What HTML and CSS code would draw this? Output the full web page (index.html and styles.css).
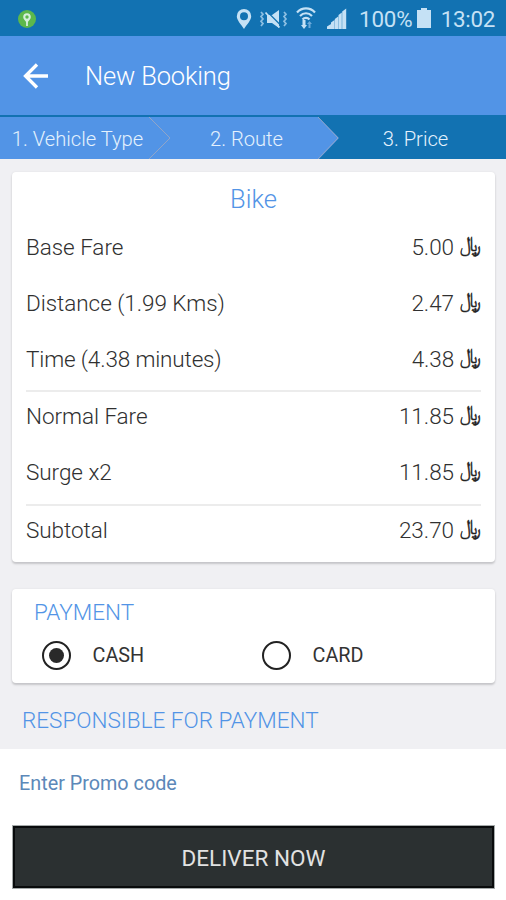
FILE: index.html
```html
<!DOCTYPE html>
<html lang="en">
<head>
<meta charset="utf-8">
<title>New Booking</title>
<link rel="stylesheet" href="styles.css">
</head>
<body>
<header class="status">
  <svg class="app-dot" viewBox="0 0 18 18"><circle cx="9" cy="9" r="9" fill="#5cb84c"/><path d="M9 16v-4" stroke="#d6efdc" stroke-width="1.800"/><path d="M9 13C7 10.500 5.200 9 5.200 7a3.800 3.800 0 0 1 7.600 0c0 2-1.800 3.500-3.800 6z" fill="#d6efdc"/><circle cx="9" cy="7" r="1.700" fill="#5cb84c"/></svg>
  <svg class="status-icons" viewBox="0 0 112 24" fill="#c5e1f5">
    <path fill-rule="evenodd" d="M8 2a7.200 7.200 0 0 0-7.200 7.200C.8 13.500 5 17 8 22c3-5 7.200-8.500 7.200-12.800A7.200 7.200 0 0 0 8 2zm0 3.300a4 4 0 1 1 0 8 4 4 0 0 1 0-8z"/>
    <path d="M31 8h5l7-5v18l-7-5h-5z"/>
    <path d="M32 5.500l13 13" stroke="#1272b2" stroke-width="1.300"/>
    <path d="M29.500 5.500l14 15" stroke="#c5e1f5" stroke-width="1.800"/>
    <path d="M25 5l2 2.300-2 2.300 2 2.400-2 2.300 2 2.300-2 2.400M48 5l2 2.300-2 2.300 2 2.400-2 2.300 2 2.300-2 2.400" fill="none" stroke="#8dbfe2" stroke-width="1.700"/>
    <g fill="none" stroke="#c5e1f5" stroke-width="2.200"><path d="M61 5.500c5-5.500 13-5.500 18 0M64 9c3.500-3.700 8.500-3.700 12 0M66.500 12.500c2-2.300 5-2.300 7 0"/></g>
    <path d="M66.500 13h3v5h1.500l-3 4-3-4h1.500z"/><path d="M72.500 21v-4H71l2.500-3 2.500 3h-1.500v4z" fill="#6daada"/>
    <path d="M91 19.500l4-2.500v5h-4zM95 15.500l3.500-2.500v9H95zM98.800 12l3.400-2.500V22h-3.400zM102.500 8l3.300-2.500V22h-3.300zM106.200 4.500l4-3V22h-4z"/>
  </svg>
  <span class="battery-text">100%</span>
  <svg class="battery" viewBox="0 0 14 20"><path d="M4 0h6v2h4v18H0V2h4z" fill="#c5e1f5"/></svg>
  <span class="clock">13:02</span>
</header>
<div class="appbar">
  <svg class="back" viewBox="0 0 26 26" fill="none" stroke="#fff" stroke-width="3.300"><path d="M25 13H2.500M14 1.500L2.500 13 14 24.500"/></svg>
  <h1>New Booking</h1>
</div>
<nav class="steps">
  <svg class="chevrons" viewBox="0 0 506 43" preserveAspectRatio="none"><path d="M0 1h318l21 21-20 21H0z" fill="#5294e6"/><path d="M149 1l21 21-21 21M318 1l20 21-20 21" fill="none" stroke="#91a5c8"/></svg>
  <span class="step s1">1. Vehicle Type</span><span class="step">2. Route</span><span class="step s3">3. Price</span>
</nav>
<main>
  <section class="card fare">
    <h2>Bike</h2>
    <div class="row"><span>Base Fare</span><span class="amt">5.00 <i>﷼</i></span></div>
    <div class="row"><span>Distance (1.99 Kms)</span><span class="amt">2.47 <i>﷼</i></span></div>
    <div class="row time"><span>Time (4.38 minutes)</span><span class="amt">4.38 <i>﷼</i></span></div>
    <div class="row line"><span>Normal Fare</span><span class="amt">11.85 <i>﷼</i></span></div>
    <div class="row"><span>Surge x2</span><span class="amt">11.85 <i>﷼</i></span></div>
    <div class="row line total"><span>Subtotal</span><span class="amt">23.70 <i>﷼</i></span></div>
  </section>
  <section class="card payment">
    <h3>PAYMENT</h3>
    <div class="options">
      <div class="option"><span class="radio on"></span><span>CASH</span></div>
      <div class="option"><span class="radio"></span><span>CARD</span></div>
    </div>
  </section>
  <h3 class="responsible">RESPONSIBLE FOR PAYMENT</h3>
</main>
<footer>
  <div class="promo">Enter Promo code</div>
  <div class="deliver">DELIVER NOW</div>
</footer>
</body>
</html>
```
FILE: styles.css
```css
* { box-sizing: border-box; }
body { margin: 0; width: 506px; height: 900px; overflow: hidden; background: #fff; font-family: Roboto, "Liberation Sans", sans-serif; font-weight: 300; color: #303030; }
h1, h2, h3 { margin: 0; font-weight: 300; }
.status { height: 36px; background: #1272b2; display: flex; align-items: center; padding: 1px 11px 0 18px; color: #c5e1f5; font-weight: 400; font-size: 22.400px; }
.app-dot { width: 18px; height: 18px; }
.status-icons { width: 112px; height: 24px; margin-left: 200px; }
.battery-text { margin-left: 11px; width: 53px; white-space: nowrap; letter-spacing: -0.2px; }
.battery { width: 14px; height: 20px; margin: -1px 0 0 5px; }
.clock { margin-left: auto; letter-spacing: -0.3px; }
.appbar { height: 79px; background: #5294e6; display: flex; align-items: center; padding-left: 23px; color: #fff; }
.back { width: 26px; height: 26px; }
h1 { font-size: 25.500px; letter-spacing: -0.15px; margin-left: 36px; }
.steps { height: 44px; background: #1272b2; display: grid; grid-template-columns: 156px 181px 169px; align-items: center; padding-top: 4px; position: relative; color: #e4f1fd; font-size: 20.200px; }
.chevrons { position: absolute; left: 0; top: 1px; width: 506px; height: 43px; }
.step { position: relative; text-align: center; white-space: nowrap; }
.s1 { padding-right: 1px; }
.s3 { padding-right: 12px; }
main { height: 590px; background: #f0f0f3; padding: 13px 11px 0 12px; }
.card { background: #fff; border-radius: 4px; box-shadow: 0 2px 2px #c6c6c9, 0 0 2px #dddde0; }
.fare { height: 390px; padding: 0 14px; }
h2 { height: 47px; line-height: 54px; text-align: center; font-size: 25.500px; color: #5294e6; }
.row { height: 56.300px; display: flex; justify-content: space-between; align-items: center; font-size: 22.500px; letter-spacing: -0.05px; }
.time { padding-bottom: 2px; letter-spacing: -0.15px; }
.line { border-top: 2px solid #ececec; margin-top: 2px; height: 54.300px; padding-bottom: 5px; }
.total { margin-top: 4px; padding-bottom: 6px; }
.amt { display: flex; align-items: center; }
.amt i { font-family: "DejaVu Sans", "Noto Sans", sans-serif; font-style: normal; font-size: 19px; line-height: 26px; margin: -8px 0 0 6px; color: #222; -webkit-text-stroke: 0.500px #222; transform: scaleY(1.12); }
.payment { height: 94px; margin-top: 27px; padding: 9px 22px 0; }
h3 { font-size: 22.500px; line-height: 28px; color: #5294e6; }
.options { display: grid; grid-template-columns: 220px 220px; margin-top: 15px; padding-left: 7.500px; }
.option { display: flex; align-items: center; gap: 22px; font-size: 19.800px; font-weight: 400; color: #333; }
.radio { width: 29px; height: 29px; border: 2.500px solid #222; border-radius: 50%; display: grid; place-items: center; }
.on::after { content: ""; width: 15px; height: 15px; border-radius: 50%; background: #292929; }
.responsible { margin: 23px 0 0 10px; }
footer { padding: 0 11px 0 12px; }
.promo { height: 76px; line-height: 69px; padding-left: 7px; font-size: 19.800px; font-weight: 400; color: #5c88b9; }
.deliver { height: 64px; background: #2b3031; border: 3px solid #090b0c; outline: 1px solid #a5aaaa; outline-offset: -1px; display: grid; place-items: center; padding-top: 2px; color: #e2e2e2; font-size: 22.500px; font-weight: 400; }
```
